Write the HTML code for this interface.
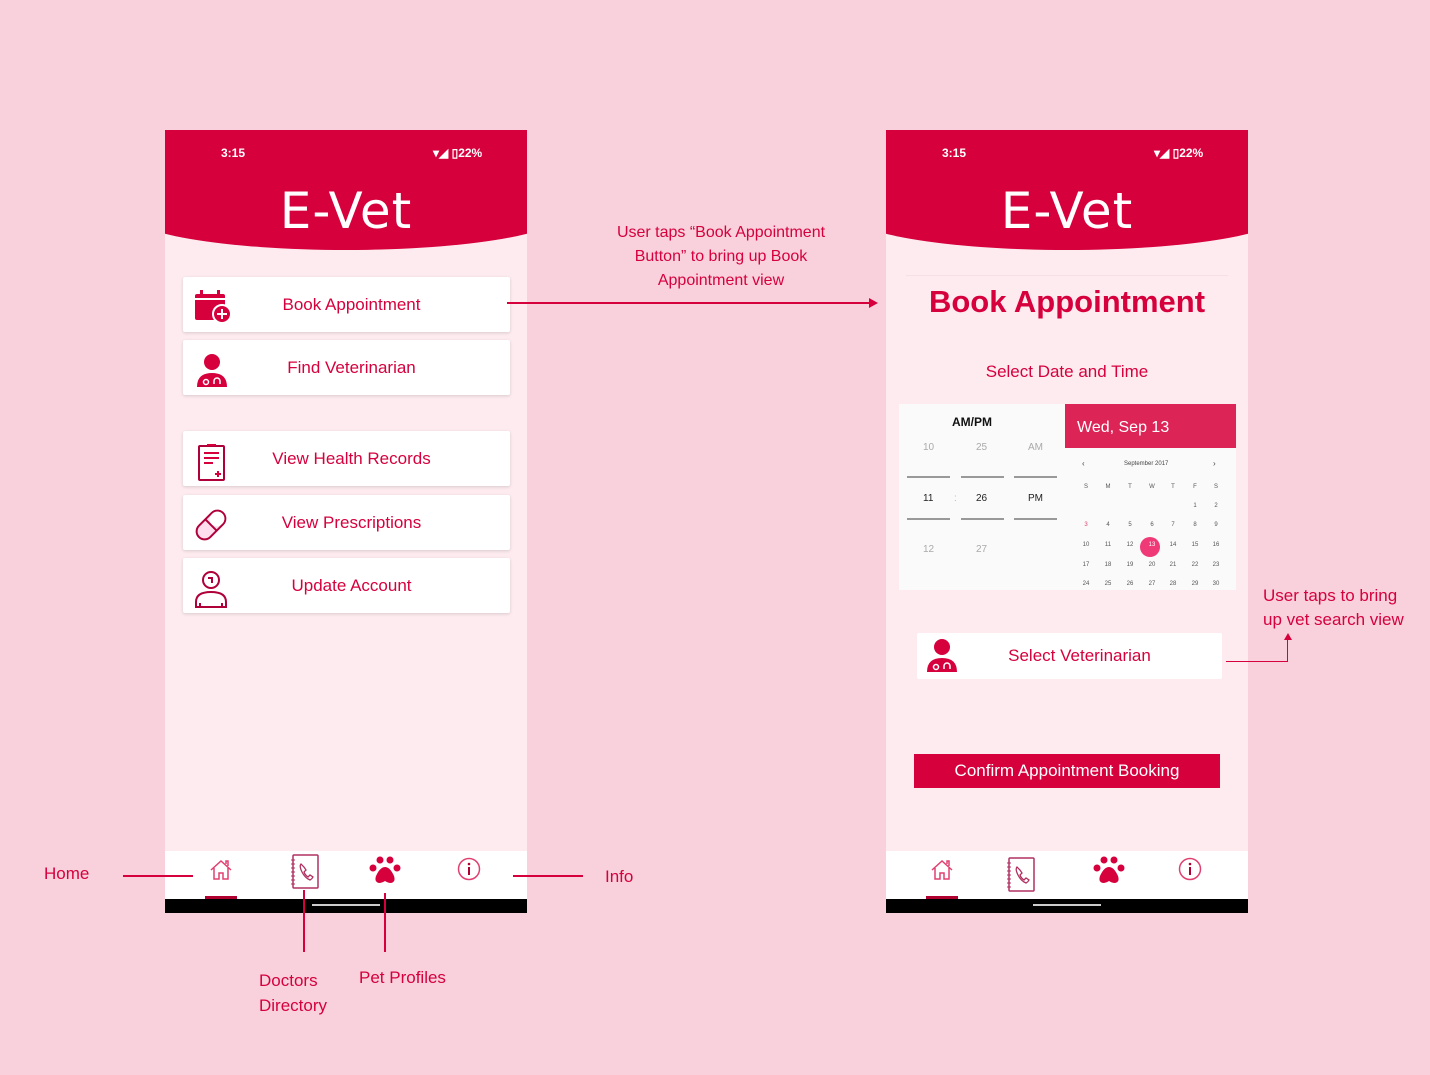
<!DOCTYPE html>
<html><head><meta charset="utf-8"><style>
*{margin:0;padding:0;box-sizing:border-box}
body{width:1430px;height:1075px;background:#f8d1dc;position:relative;overflow:hidden;font-family:"Liberation Sans",sans-serif;color:#d6003d}
.a{position:absolute}
.phone{position:absolute;top:130px;width:362px;height:783px;background:#fdebef;overflow:hidden}
.hdr{position:absolute;left:-40px;top:-300px;width:442px;height:420px;background:#d6003d;border-radius:0 0 50% 50%/0 0 38px 38px}
.st{position:absolute;top:16px;color:#fff;font-size:12px;font-weight:bold}
.logo{position:absolute;top:52px;width:100%;text-align:center;color:#fff;font-size:50px;font-family:"DejaVu Sans","Liberation Sans",sans-serif;letter-spacing:1px}
.btn{position:absolute;left:18px;width:327px;height:55px;background:#fff;box-shadow:0 1px 3px rgba(0,0,0,.15);border-radius:2px;font-size:17px;text-align:center;line-height:55px;padding-left:10px}
.btn svg{position:absolute;left:10px;top:12px}
.nav{position:absolute;left:0;top:721px;width:362px;height:48px;background:#fff}
.bar{position:absolute;left:0;top:769px;width:362px;height:14px;background:#000}
.bar i{position:absolute;left:147px;top:5px;width:68px;height:2px;background:#ccc}
.lbl{position:absolute;font-size:17px;color:#d6003d}
.ln{position:absolute;background:#d6003d}
.cal span{position:absolute;font-size:6px;color:#555;width:14px;text-align:center}
</style></head><body>

<!-- PHONE 1 -->
<div class="phone" style="left:165px">
 <div class="hdr"></div>
 <div class="st" style="left:56px">3:15</div>
 <div class="st" style="left:268px">▾◢ ▯22%</div>
 <div class="logo">E-Vet</div>
 <div class="btn" style="top:147px">Book Appointment
  <svg width="40" height="34" viewBox="0 0 40 34"><rect x="2" y="5" width="30" height="26" rx="2" fill="#d6003d"/><rect x="7" y="1" width="3" height="7" fill="#d6003d"/><rect x="24" y="1" width="3" height="7" fill="#d6003d"/><rect x="2" y="9" width="30" height="2" fill="#fff"/><circle cx="29" cy="25" r="9" fill="#d6003d" stroke="#fff" stroke-width="2"/><path d="M29 20v10M24 25h10" stroke="#fff" stroke-width="2"/></svg></div>
 <div class="btn" style="top:210px">Find Veterinarian
  <svg width="40" height="40" viewBox="0 0 40 40"><circle cx="19" cy="10" r="8" fill="#d6003d"/><path d="M4 35q0-14 15-14t15 14z" fill="#d6003d"/><circle cx="13" cy="30" r="2.5" fill="none" stroke="#fff" stroke-width="1.5"/><path d="M21 32v-3a3 3 0 0 1 6 0v3" fill="none" stroke="#fff" stroke-width="1.5"/></svg></div>
 <div class="btn" style="top:301px">View Health Records
  <svg width="40" height="40" viewBox="0 0 40 40"><rect x="6" y="3" width="25" height="34" rx="1" fill="none" stroke="#b0003a" stroke-width="2"/><path d="M14 2h9M11 10h15M11 15h15M11 20h9M22 31h6M25 28v6" stroke="#d6003d" stroke-width="2"/></svg></div>
 <div class="btn" style="top:365px">View Prescriptions
  <svg width="40" height="40" viewBox="0 0 40 40"><g transform="rotate(-45 18 18)"><rect x="1" y="10" width="34" height="16" rx="8" fill="#fde" stroke="#b0003a" stroke-width="2"/><path d="M18 10v16" stroke="#b0003a" stroke-width="2"/><rect x="19" y="11" width="15" height="14" rx="7" fill="#fff"/></g></svg></div>
 <div class="btn" style="top:428px">Update Account
  <svg width="40" height="40" viewBox="0 0 40 40"><circle cx="18" cy="10" r="8" fill="none" stroke="#b0003a" stroke-width="2"/><path d="M15 8h4v5" stroke="#b0003a" stroke-width="2" fill="none"/><path d="M3 37v-5q0-10 15-10t15 10v5zM7 37v-4M29 37v-4" fill="none" stroke="#b0003a" stroke-width="2"/></svg></div>
 <div class="nav">
  <svg class="a" style="left:44px;top:8px" width="24" height="22" viewBox="0 0 24 22"><path d="M2 11L12 2l10 9M5 9v11h5v-6h4v6h5V9M17 5V2h2v5" fill="none" stroke="#e04070" stroke-width="1.5"/></svg>
  <div class="a" style="left:40px;top:45px;width:32px;height:3px;background:#b00030"></div>
  <svg class="a" style="left:124px;top:3px" width="32" height="36" viewBox="0 0 32 36"><rect x="4" y="1" width="25" height="33" rx="1" fill="none" stroke="#b03060" stroke-width="1.5"/><path d="M2 6h4M2 10h4M2 14h4M2 18h4M2 22h4M2 26h4M2 30h4" stroke="#b03060"/><path d="M12 10q-2 2 1 8t8 8q2-1 3-3l-3-2-2 2q-3-2-4-5l2-2-2-3z" fill="none" stroke="#b03060" stroke-width="1.3"/></svg>
  <svg class="a" style="left:204px;top:4px" width="32" height="32" viewBox="0 0 32 32"><circle cx="11" cy="5" r="3.5" fill="#d6003d"/><circle cx="21" cy="5" r="3.5" fill="#d6003d"/><circle cx="4" cy="13" r="3.5" fill="#d6003d"/><circle cx="28" cy="13" r="3.5" fill="#d6003d"/><path d="M16 12q-5 0-9 9q-2 6 3 7q3 0 6-2q3 2 6 2q5-1 3-7q-4-9-9-9z" fill="#d6003d"/></svg>
  <svg class="a" style="left:292px;top:6px" width="24" height="24" viewBox="0 0 24 24"><circle cx="12" cy="12" r="10.5" fill="none" stroke="#e04070" stroke-width="1.5"/><circle cx="12" cy="7" r="1.3" fill="#b00030"/><path d="M12 10v8" stroke="#b00030" stroke-width="2"/></svg>
 </div>
 <div class="bar"><i></i></div>
</div>

<!-- PHONE 2 -->
<div class="phone" style="left:886px">
 <div class="hdr"></div>
 <div class="st" style="left:56px">3:15</div>
 <div class="st" style="left:268px">▾◢ ▯22%</div>
 <div class="logo">E-Vet</div>
 <div class="a" style="left:20px;top:145px;width:322px;height:1px;background:#f6e0e5"></div>
 <div class="a" style="left:0;top:154px;width:362px;text-align:center;font-size:31px;font-weight:bold">Book Appointment</div>
 <div class="a" style="left:0;top:232px;width:362px;text-align:center;font-size:17px">Select Date and Time</div>
 <div class="a cal" style="left:13px;top:274px;width:337px;height:186px;background:#fafafa">
  <div class="a" style="left:53px;top:11px;font-size:12px;font-weight:bold;color:#111">AM/PM</div>
  <div class="a" style="left:24px;top:38px;font-size:10px;color:#aaa">10</div><div class="a" style="left:77px;top:38px;font-size:10px;color:#aaa">25</div><div class="a" style="left:129px;top:38px;font-size:10px;color:#aaa">AM</div>
  <div class="a" style="left:8px;top:72px;width:43px;height:2px;background:#999"></div><div class="a" style="left:62px;top:72px;width:43px;height:2px;background:#999"></div><div class="a" style="left:115px;top:72px;width:43px;height:2px;background:#999"></div>
  <div class="a" style="left:24px;top:89px;font-size:10px;color:#222">11</div><div class="a" style="left:55px;top:89px;font-size:10px;color:#bbb">:</div><div class="a" style="left:77px;top:89px;font-size:10px;color:#222">26</div><div class="a" style="left:129px;top:89px;font-size:10px;color:#222">PM</div>
  <div class="a" style="left:8px;top:114px;width:43px;height:2px;background:#999"></div><div class="a" style="left:62px;top:114px;width:43px;height:2px;background:#999"></div><div class="a" style="left:115px;top:114px;width:43px;height:2px;background:#999"></div>
  <div class="a" style="left:24px;top:140px;font-size:10px;color:#aaa">12</div><div class="a" style="left:77px;top:140px;font-size:10px;color:#aaa">27</div>
  <div class="a" style="left:166px;top:0;width:171px;height:44px;background:#dc2456;color:#fff;font-size:16px;line-height:48px;padding-left:12px">Wed, Sep 13</div>
  <div class="a" style="left:183px;top:55px;font-size:8px;color:#444">‹</div><div class="a" style="left:314px;top:55px;font-size:8px;color:#444">›</div>
  <div class="a" style="left:225px;top:57px;font-size:6px;color:#444">September 2017</div>
  <div class="a" style="left:241px;top:133px;width:20px;height:20px;border-radius:50%;background:#f03a78"></div>
 </div>
 <div class="btn" style="left:31px;top:503px;width:305px;height:46px;line-height:46px;box-shadow:none;padding-left:20px">Select Veterinarian
  <svg width="40" height="40" viewBox="0 0 40 40" style="top:4px;left:6px"><circle cx="19" cy="10" r="8" fill="#d6003d"/><path d="M4 35q0-14 15-14t15 14z" fill="#d6003d"/><circle cx="13" cy="30" r="2.5" fill="none" stroke="#fff" stroke-width="1.5"/><path d="M21 32v-3a3 3 0 0 1 6 0v3" fill="none" stroke="#fff" stroke-width="1.5"/></svg></div>
 <div class="a" style="left:28px;top:624px;width:306px;height:34px;background:#d6003d;color:#fff;font-size:17px;text-align:center;line-height:34px">Confirm Appointment Booking</div>
 <div class="nav">
  <svg class="a" style="left:44px;top:8px" width="24" height="22" viewBox="0 0 24 22"><path d="M2 11L12 2l10 9M5 9v11h5v-6h4v6h5V9M17 5V2h2v5" fill="none" stroke="#e04070" stroke-width="1.5"/></svg>
  <div class="a" style="left:40px;top:45px;width:32px;height:3px;background:#b00030"></div>
  <svg class="a" style="left:119px;top:6px" width="32" height="36" viewBox="0 0 32 36"><rect x="4" y="1" width="25" height="33" rx="1" fill="none" stroke="#b03060" stroke-width="1.5"/><path d="M2 6h4M2 10h4M2 14h4M2 18h4M2 22h4M2 26h4M2 30h4" stroke="#b03060"/><path d="M12 10q-2 2 1 8t8 8q2-1 3-3l-3-2-2 2q-3-2-4-5l2-2-2-3z" fill="none" stroke="#b03060" stroke-width="1.3"/></svg>
  <svg class="a" style="left:207px;top:4px" width="32" height="32" viewBox="0 0 32 32"><circle cx="11" cy="5" r="3.5" fill="#d6003d"/><circle cx="21" cy="5" r="3.5" fill="#d6003d"/><circle cx="4" cy="13" r="3.5" fill="#d6003d"/><circle cx="28" cy="13" r="3.5" fill="#d6003d"/><path d="M16 12q-5 0-9 9q-2 6 3 7q3 0 6-2q3 2 6 2q5-1 3-7q-4-9-9-9z" fill="#d6003d"/></svg>
  <svg class="a" style="left:292px;top:6px" width="24" height="24" viewBox="0 0 24 24"><circle cx="12" cy="12" r="10.5" fill="none" stroke="#e04070" stroke-width="1.5"/><circle cx="12" cy="7" r="1.3" fill="#b00030"/><path d="M12 10v8" stroke="#b00030" stroke-width="2"/></svg>
 </div>
 <div class="bar"><i></i></div>
</div>

<!-- calendar days -->
<div class="a cal" style="left:899px;top:404px">
<span style="left:180px;top:80px">S</span><span style="left:202px;top:80px">M</span><span style="left:224px;top:80px">T</span><span style="left:246px;top:80px">W</span><span style="left:267px;top:80px">T</span><span style="left:289px;top:80px">F</span><span style="left:310px;top:80px">S</span>
<span style="left:289px;top:99px">1</span><span style="left:310px;top:99px">2</span>
<span style="left:180px;top:118px;color:#e04070">3</span><span style="left:202px;top:118px">4</span><span style="left:224px;top:118px">5</span><span style="left:246px;top:118px">6</span><span style="left:267px;top:118px">7</span><span style="left:289px;top:118px">8</span><span style="left:310px;top:118px">9</span>
<span style="left:180px;top:138px">10</span><span style="left:202px;top:138px">11</span><span style="left:224px;top:138px">12</span><span style="left:246px;top:138px;color:#fff">13</span><span style="left:267px;top:138px">14</span><span style="left:289px;top:138px">15</span><span style="left:310px;top:138px">16</span>
<span style="left:180px;top:158px">17</span><span style="left:202px;top:158px">18</span><span style="left:224px;top:158px">19</span><span style="left:246px;top:158px">20</span><span style="left:267px;top:158px">21</span><span style="left:289px;top:158px">22</span><span style="left:310px;top:158px">23</span>
<span style="left:180px;top:177px">24</span><span style="left:202px;top:177px">25</span><span style="left:224px;top:177px">26</span><span style="left:246px;top:177px">27</span><span style="left:267px;top:177px">28</span><span style="left:289px;top:177px">29</span><span style="left:310px;top:177px">30</span>
</div>

<!-- annotations -->
<div class="lbl" style="left:590px;top:221px;width:262px;text-align:center;line-height:24px;font-size:16px">User taps “Book Appointment Button” to bring up Book Appointment view</div>
<div class="ln" style="left:507px;top:302px;width:364px;height:2px"></div>
<div class="a" style="left:869px;top:298px;width:0;height:0;border-left:9px solid #d6003d;border-top:5px solid transparent;border-bottom:5px solid transparent"></div>

<div class="lbl" style="left:1263px;top:584px;line-height:24px">User taps to bring<br>up vet search view</div>
<div class="ln" style="left:1226px;top:661px;width:62px;height:1px"></div>
<div class="ln" style="left:1287px;top:640px;width:1px;height:22px"></div>
<div class="a" style="left:1284px;top:633px;width:0;height:0;border-bottom:7px solid #d6003d;border-left:4px solid transparent;border-right:4px solid transparent"></div>

<div class="lbl" style="left:44px;top:864px">Home</div>
<div class="ln" style="left:123px;top:875px;width:70px;height:2px"></div>
<div class="lbl" style="left:605px;top:867px">Info</div>
<div class="ln" style="left:513px;top:875px;width:70px;height:2px"></div>
<div class="ln" style="left:303px;top:890px;width:2px;height:62px"></div>
<div class="ln" style="left:384px;top:893px;width:2px;height:59px"></div>
<div class="lbl" style="left:259px;top:968px;line-height:25px">Doctors<br>Directory</div>
<div class="lbl" style="left:359px;top:968px">Pet Profiles</div>
</body></html>
